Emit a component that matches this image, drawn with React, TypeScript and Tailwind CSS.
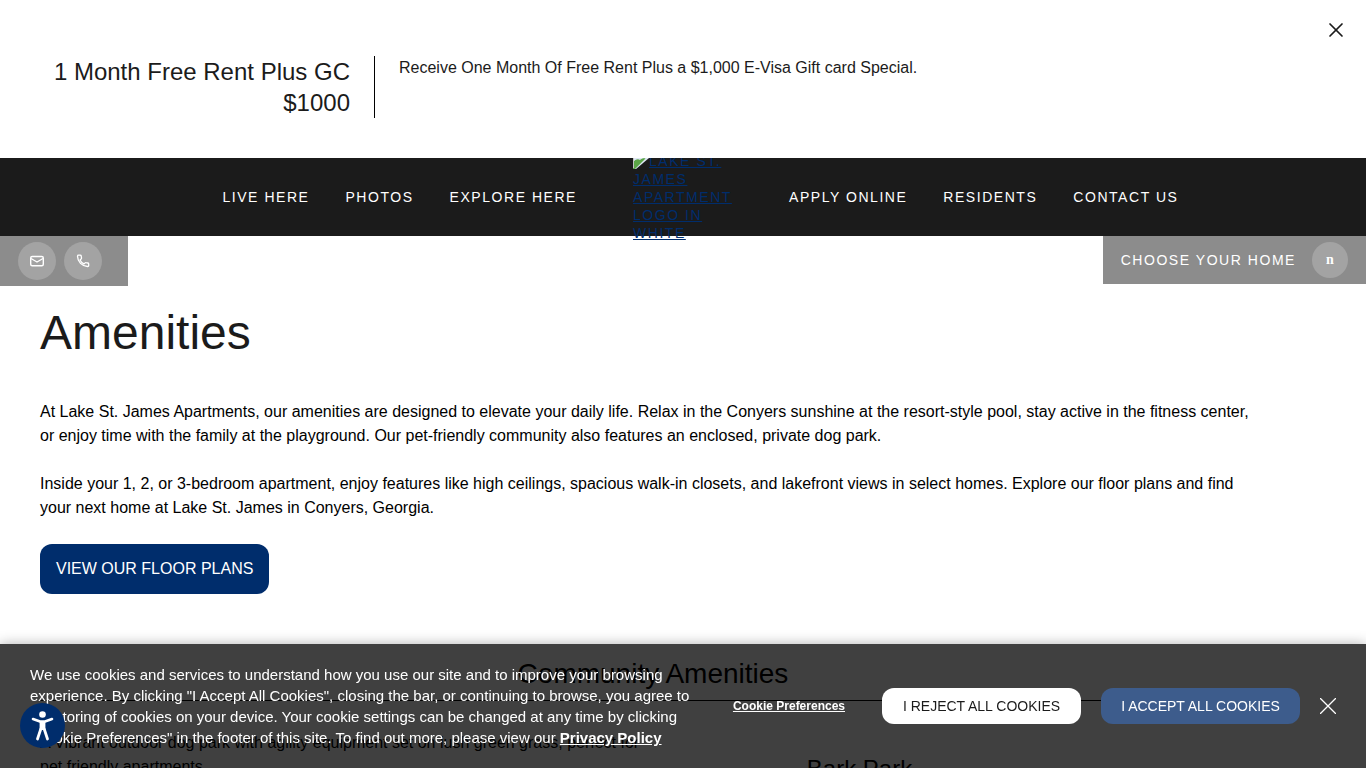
import React, { useState } from 'react';
import { X } from 'lucide-react';

const leftLinks = ['Live Here', 'Photos', 'Explore Here'];
const rightLinks = ['Apply Online', 'Residents', 'Contact Us'];

const NavLink: React.FC<{ label: string }> = ({ label }) => (
  <a href="#" className="px-[18px] text-white hover:underline">{label}</a>
);

const App: React.FC = () => {
  const [showOffer, setShowOffer] = useState(true);
  const [showCookies, setShowCookies] = useState(true);

  return (
    <div className="min-h-screen bg-white text-black text-base font-['Liberation_Sans',Arial,sans-serif]">

      {/* Special offer */}
      {showOffer && (
        <section className="relative z-20 bg-white flex items-start pt-14 pb-10 pl-10 pr-4 text-[#1b1b1b]">
          <h2 className="w-[335px] shrink-0 pr-6 border-r border-black text-right text-2xl leading-[31px]">1 Month Free Rent Plus GC $1000</h2>
          <p className="grow pl-6 leading-6">Receive One Month Of Free Rent Plus a $1,000 E-Visa Gift card Special.</p>
          <button onClick={() => setShowOffer(false)} aria-label="Close offer" className="absolute top-[18px] right-[18px]">
            <X className="w-6 h-6" strokeWidth={1.7} />
          </button>
        </section>
      )}

      {/* Navigation */}
      <header className="relative z-10 text-sm uppercase tracking-[0.11em]">
        <nav className="h-[78px] bg-[#1b1b1b] flex items-center">
          <div className="flex-1 flex justify-end">
            {leftLinks.map((label) => <NavLink key={label} label={label} />)}
          </div>
          <a href="#" className="w-[100px] mx-[38px] leading-[18px] text-[#002d6c] underline">
            <svg viewBox="0 0 16 16" className="inline-block w-4 h-4 align-text-bottom" aria-hidden="true">
              <path d="M0 0h16v5L3 16H0z" fill="#dfe8f5" />
              <path d="M0 16V9.500C2 6.500 5 5.500 7 7c1.500-1.500 4-2 5.500-1.500L2 16z" fill="#5ba546" />
              <path d="M.5 15V.5H16" fill="none" stroke="#c4c4c4" />
            </svg>
            Lake St. James Apartment logo in white
          </a>
          <div className="flex-1 flex">
            {rightLinks.map((label) => <NavLink key={label} label={label} />)}
          </div>
        </nav>

        <div className="absolute top-full inset-x-0 -z-10 flex justify-between items-start text-white">
          <div className="flex gap-2 h-[50px] w-32 pl-[18px] pt-1.5 bg-[#8c8c8c]">
            <a href="#" aria-label="Email us" className="w-[38px] h-[38px] rounded-full bg-[#a3a3a3] flex items-center justify-center">
              <svg viewBox="0 0 16 16" className="w-4 h-4" fill="none" stroke="currentColor" strokeWidth="1.4" strokeLinejoin="round">
                <rect x="1.700" y="3.500" width="12.600" height="9.300" rx="1.500" />
                <path d="M2 5.500 8 9l6-3.500" />
              </svg>
            </a>
            <a href="#" aria-label="Call us" className="w-[38px] h-[38px] rounded-full bg-[#a3a3a3] flex items-center justify-center">
              <svg viewBox="0 0 16 16" className="w-4 h-4" fill="none" stroke="currentColor" strokeWidth="1.300" strokeLinejoin="round">
                <path d="M2.500 3.200c0-.6.5-1 1-1h1.700c.5 0 .9.3 1 .8l.3 2c.1.400-.1.800-.4 1L5 7c.8 1.600 2.200 3 3.900 3.900l1.100-1c.3-.3.700-.4 1.100-.3l1.800.400c.5.100.8.500.8 1v1.500c0 .6-.5 1.100-1.100 1C6.800 13.200 2.700 9 2.500 3.200z" />
              </svg>
            </a>
          </div>
          <a href="#" className="flex items-center gap-4 h-12 px-[18px] bg-[#8c8c8c]">
            <span>Choose Your Home</span>
            <span className="w-9 h-9 rounded-full bg-[#a3a3a3] flex items-center justify-center normal-case font-bold tracking-normal text-sm font-['Liberation_Serif',serif]">n</span>
          </a>
        </div>
      </header>

      {/* Page content */}
      <main className="pl-10 pr-[100px] pt-16">
        <h1 className="text-5xl leading-[66px] text-[#1b1b1b]">Amenities</h1>
        <div className="mt-[34px] space-y-6 leading-6">
          <p>At Lake St. James Apartments, our amenities are designed to elevate your daily life. Relax in the Conyers sunshine at the resort-style pool, stay active in the fitness center, or enjoy time with the family at the playground. Our pet-friendly community also features an enclosed, private dog park.</p>
          <p>Inside your 1, 2, or 3-bedroom apartment, enjoy features like high ceilings, spacious walk-in closets, and lakefront views in select homes. Explore our floor plans and find your next home at Lake St. James in Conyers, Georgia.</p>
        </div>
        <a href="#" className="inline-block mt-6 px-4 py-[13px] leading-6 rounded-xl bg-[#002d6c] text-white uppercase">View Our Floor Plans</a>

        <section className="mt-[62px]">
          <h2 className="pb-2 text-[28px] leading-9 text-center">Community Amenities</h2>
          <div className="border-t border-black"></div>
          <div className="flex pt-[30px]">
            <p className="w-1/2 leading-6">A Vibrant outdoor dog park with agility equipment set on lush green grass, perfect for pet friendly apartments.</p>
            <h3 className="w-1/2 pt-[22px] pr-[200px] text-center text-2xl leading-8">Bark Park</h3>
          </div>
        </section>
      </main>

      {/* Cookie bar */}
      {showCookies && (
        <div className="fixed bottom-0 inset-x-0 z-30 h-[124px] flex items-center px-[30px] bg-black/75 text-white shadow-[0_0_12px_rgba(0,0,0,0.3)]">
          <p className="w-[670px] text-[15px] leading-[21px]">
            We use cookies and services to understand how you use our site and to improve your browsing experience. By clicking "I Accept All Cookies", closing the bar, or continuing to browse, you agree to the storing of cookies on your device. Your cookie settings can be changed at any time by clicking "Cookie Preferences" in the footer of this site. To find out more, please view our <a href="#" className="font-bold underline">Privacy Policy</a>
          </p>
          <div className="ml-auto flex items-center text-sm">
            <button className="mr-[37px] text-xs font-bold underline">Cookie Preferences</button>
            <button onClick={() => setShowCookies(false)} className="h-9 w-[199px] mr-5 rounded-xl bg-white text-[#1b1b1b] uppercase">I Reject All Cookies</button>
            <button onClick={() => setShowCookies(false)} className="h-9 w-[199px] mr-5 rounded-xl bg-[#3d5c8c] text-white uppercase">I Accept All Cookies</button>
            <button onClick={() => setShowCookies(false)} aria-label="Close cookie bar">
              <svg viewBox="0 0 16 16" className="w-4 h-4" stroke="currentColor" strokeWidth="1.300">
                <path d="M0 0l16 16M16 0L0 16" />
              </svg>
            </button>
          </div>
        </div>
      )}

      {/* Accessibility menu */}
      <button aria-label="Accessibility menu" className="fixed left-5 bottom-5 z-40 w-[45px] h-[45px] rounded-full bg-[#002d6c] text-white flex items-center justify-center">
        <svg viewBox="0 0 32 32" className="w-8 h-8" fill="currentColor" stroke="currentColor" strokeLinecap="round" strokeLinejoin="round">
          <circle cx="15.500" cy="4.500" r="3.300" stroke="none" />
          <path d="M6 9l7 2.500h5L25 9" fill="none" strokeWidth="2.600" />
          <path d="M13.500 12h4v7.500l-2-.5-2 .5z" strokeWidth="1.800" />
          <path d="M13.800 19l-3.300 10M17.200 19l3.300 10" fill="none" strokeWidth="2.800" />
        </svg>
      </button>
    </div>
  );
};

export default App;
